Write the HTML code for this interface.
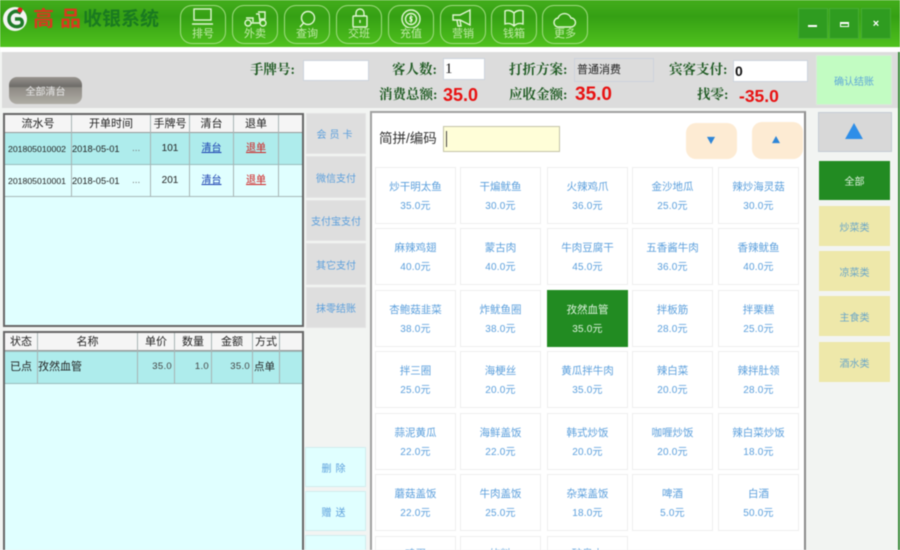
<!DOCTYPE html>
<html lang="zh"><head><meta charset="utf-8"><title>收银系统</title>
<style>
html,body{margin:0;padding:0;width:900px;height:550px;overflow:hidden;background:#f2f4f2}
#p{position:relative;width:900px;height:550px;overflow:hidden;font-family:"Liberation Sans","Noto Sans CJK SC",sans-serif;filter:blur(.45px);background:#f2f4f2}
#p div,#p span.a,#p svg{position:absolute;box-sizing:border-box}
.c{display:flex;align-items:center;justify-content:center;text-align:center}
.ib{top:5px;width:46px;height:39px;border:1px solid #9fdc80;border-radius:12px;color:#c0eaa8;font-size:11px;text-align:center;padding-top:21px;line-height:14px}
.ib svg{left:10px;top:2px;width:24px;height:20px;fill:none;stroke:#e0f6d2;stroke-width:1.4}
.wb{top:8px;width:30px;height:31px;background:#2f9c20;border:1px solid #46ad33;color:#fff}
.l{font-family:"Liberation Serif","Noto Serif CJK SC",serif;font-weight:bold;font-size:13.5px;color:#1e5a22;white-space:nowrap;line-height:16px}
.r{font-weight:bold;font-size:18px;color:#e81212;line-height:18px;white-space:nowrap}
.in{background:#fff;border:1px solid #ccd4dc}
.tb{background:#e0ffff;border:2px solid #666}
.v{top:0;bottom:0;width:1px;background:#a8b4b4}
.cell{font-size:10px;line-height:14px;color:#222;white-space:nowrap}
.h{background:#f5f5f5;height:18px;left:0;right:0;top:0;border-bottom:1px solid #999}
.m{left:306px;width:60px;background:#dedede;border:1px solid #e4e4e4;color:#5b9fdc;font-size:10px}
.n{left:305px;width:61px;background:#e0ffff;border:1px solid #d0eeee;color:#5b9fdc;font-size:10px}
.t{width:81px;height:57px;background:#fff;border:1px solid #eee;color:#5b9fdc;text-align:center;font-size:10.5px;line-height:14px;padding-top:12px;overflow:hidden}
.t span{display:block}.t span+span{margin-top:6px;font-size:10px;letter-spacing:.2px}
.t.s{background:#228b22;color:#dff3df;border-color:#228b22}
.t.e{height:14px;padding-top:10px;border-bottom:0}
.k{left:819px;width:71px;height:40px;background:#eee8aa;color:#6aa6c8;font-size:10px}
.lk{text-decoration:underline;font-weight:normal}
.id{font-size:8.7px}.dt{font-size:9.3px}
.nm{text-align:right;font-size:9.5px;letter-spacing:.3px;color:#444}
</style></head><body><div id="p">

<div style="left:0;top:0;width:900px;height:47px;background:linear-gradient(#43ad1c,#35a014 35%,#50c21e)"></div>
<div style="left:0;top:47px;width:900px;height:5px;background:#fff"></div>
<div style="left:2px;top:52px;width:896px;height:56px;background:#dcdcdc"></div>

<svg style="left:2px;top:5px;width:28px;height:27px" viewBox="0 0 28 27"><circle cx="13" cy="14" r="12" fill="#f4f4f4"/><path d="M19 8C13 4 7 8 7 14s6 9 11 7c3-1 3-6 0-7h-5" fill="none" stroke="#1e7a28" stroke-width="3.5"/><circle cx="18" cy="5" r="2.500" fill="#e02020"/></svg>
<span class="a" style="left:33px;top:8px;font:bold 21px/24px 'Liberation Sans','Noto Sans CJK SC',sans-serif;color:#d9381e;letter-spacing:6px;white-space:nowrap">高品</span>
<span class="a" style="left:83px;top:9px;font:bold 19px/22px 'Liberation Sans','Noto Sans CJK SC',sans-serif;color:#1a7a20;white-space:nowrap">收银系统</span>

<div class="ib" style="left:180px"><svg viewBox="0 0 24 20"><rect x="3" y="1" width="17" height="11"/><path d="M1 16h21"/></svg>排号</div>
<div class="ib" style="left:232px"><svg viewBox="0 0 24 20"><circle cx="5" cy="15" r="3"/><circle cx="20" cy="15" r="3"/><path d="M8 15h9l-1-9h-3M3 10h7v4M15 4h7v7h-5"/></svg>外卖</div>
<div class="ib" style="left:284px"><svg viewBox="0 0 24 20"><circle cx="13" cy="10" r="6.500"/><path d="M8.500 15L5 19"/></svg>查询</div>
<div class="ib" style="left:336px"><svg viewBox="0 0 24 20"><rect x="6" y="8" width="14" height="11" rx="1"/><path d="M9 8V5a4 4 0 0 1 8 0v3M13 12v3"/></svg>交班</div>
<div class="ib" style="left:388px"><svg viewBox="0 0 24 20"><circle cx="12" cy="11" r="9"/><circle cx="12" cy="11" r="5.500"/><path d="M14 9h-3v2h2v2h-3M12 7v8" stroke-width="1"/></svg>充值</div>
<div class="ib" style="left:440px"><svg viewBox="0 0 24 20"><path d="M2 7h7l10-5v15L9 12H2zM6 12l1 6h3l-1-6"/></svg>营销</div>
<div class="ib" style="left:491px"><svg viewBox="0 0 24 20"><path d="M12 5C9 2 5 2 3 3v13c3-1 6-1 9 2 3-3 6-3 9-2V3c-2-1-6-1-9 2zM12 5v13"/></svg>钱箱</div>
<div class="ib" style="left:542px"><svg viewBox="0 0 24 20"><path d="M6 19a4.500 4.500 0 0 1-1-9 7 7 0 0 1 13 0 4.500 4.500 0 0 1 0 9z"/></svg>更多</div>

<div class="wb c" style="left:798px"><div style="left:9px;top:16px;width:9px;height:2px;background:#fff"></div></div>
<div class="wb c" style="left:829px"><div style="left:10px;top:13px;width:9px;height:5px;border:1.500px solid #fff;border-top-width:2px"></div></div>
<div class="wb c" style="left:861px;font:bold 11px/12px 'Liberation Sans',sans-serif">×</div>

<div class="c" style="left:9px;top:77px;width:73px;height:27px;border-radius:8px;background:linear-gradient(#98948e,#6d6b68 35%,#8e8b85 40%,#b0ada6);color:#e8e8e8;font-size:10px">全部清台</div>

<span class="a l" style="left:250px;top:62px">手牌号:</span>
<div class="in" style="left:303px;top:60px;width:66px;height:21px"></div>
<span class="a l" style="left:392px;top:62px">客人数:</span>
<div class="in" style="left:443px;top:58px;width:42px;height:22px;font:15px/20px 'Liberation Serif',serif;color:#111;padding-left:1px">1</div>
<span class="a l" style="left:379px;top:87px">消费总额:</span>
<span class="a r" style="left:443px;top:86px">35.0</span>
<span class="a l" style="left:509px;top:62px">打折方案:</span>
<div style="left:574px;top:58px;width:80px;height:24px;background:#dcdcdc;border:1px solid #ccd2dc;font-size:11px;line-height:22px;padding-left:2px;color:#222">普通消费</div>
<span class="a l" style="left:509px;top:87px">应收金额:</span>
<span class="a r" style="left:575px;top:86px;font-size:19px">35.0</span>
<span class="a l" style="left:669px;top:62px">宾客支付:</span>
<div class="in" style="left:733px;top:60px;width:75px;height:22px;font:bold 14px/20px 'Liberation Sans',sans-serif;color:#111;padding-left:1px">0</div>
<span class="a l" style="left:697px;top:87px">找零:</span>
<span class="a r" style="left:739px;top:87px;font-size:17.5px">-35.0</span>
<div class="c" style="left:816px;top:55px;width:76px;height:50px;background:#c2fcc2;border:1px solid #d8ecd8;color:#5fa8d8;font-size:10px">确认结账</div>

<!-- top table -->
<div class="tb" style="left:3px;top:113px;width:301px;height:214px">
  <div class="h"></div>
  <div style="left:0;right:0;top:18px;height:32px;background:#aeecec;border-bottom:1px solid #9bb"></div>
  <div style="left:0;right:0;top:50px;height:32px;border-bottom:1px solid #a8b8b8"></div>
  <div style="left:0;right:0;top:0;height:82px">
  <div class="v" style="left:66px"></div><div class="v" style="left:145px"></div><div class="v" style="left:184px"></div><div class="v" style="left:228px"></div><div class="v" style="left:273px"></div>
  </div>
  <div class="cell c" style="left:0;top:2px;width:66px;font-size:11px">流水号</div>
  <div class="cell c" style="left:67px;top:2px;width:78px;font-size:11px">开单时间</div>
  <div class="cell c" style="left:146px;top:2px;width:38px;font-size:11px">手牌号</div>
  <div class="cell c" style="left:185px;top:2px;width:43px;font-size:11px">清台</div>
  <div class="cell c" style="left:229px;top:2px;width:44px;font-size:11px">退单</div>

  <div class="cell id" style="left:3px;top:27px">201805010002</div>
  <div class="cell dt" style="left:67px;top:27px">2018-05-01</div>
  <div class="cell" style="left:127px;top:27px;color:#777">...</div>
  <div class="cell c" style="left:146px;top:27px;width:38px">101</div>
  <div class="cell c" style="left:185px;top:27px;width:43px;color:#1a3fb0"><span class="lk">清台</span></div>
  <div class="cell c" style="left:229px;top:27px;width:44px;color:#d02020"><span class="lk">退单</span></div>

  <div class="cell id" style="left:3px;top:59px">201805010001</div>
  <div class="cell dt" style="left:67px;top:59px">2018-05-01</div>
  <div class="cell" style="left:127px;top:59px;color:#777">...</div>
  <div class="cell c" style="left:146px;top:59px;width:38px">201</div>
  <div class="cell c" style="left:185px;top:59px;width:43px;color:#1a3fb0"><span class="lk">清台</span></div>
  <div class="cell c" style="left:229px;top:59px;width:44px;color:#d02020"><span class="lk">退单</span></div>
</div>

<!-- bottom table -->
<div class="tb" style="left:3px;top:331px;width:301px;height:219px;border-bottom:0">
  <div class="h"></div>
  <div style="left:0;right:0;top:18px;height:33px;background:#aeecec;border-bottom:1px solid #9bb;border-top:1px solid #9bb"></div>
  <div style="left:0;right:0;top:0;height:51px">
  <div class="v" style="left:32px"></div><div class="v" style="left:132px"></div><div class="v" style="left:169px"></div><div class="v" style="left:206px"></div><div class="v" style="left:247px"></div><div class="v" style="left:274px"></div>
  </div>
  <div class="cell c" style="left:0;top:2px;width:32px;font-size:11px">状态</div>
  <div class="cell c" style="left:33px;top:2px;width:99px;font-size:11px">名称</div>
  <div class="cell c" style="left:133px;top:2px;width:36px;font-size:11px">单价</div>
  <div class="cell c" style="left:170px;top:2px;width:36px;font-size:11px">数量</div>
  <div class="cell c" style="left:207px;top:2px;width:40px;font-size:11px">金额</div>
  <div class="cell c" style="left:248px;top:2px;width:26px;font-size:11px">方式</div>
  <div class="cell c" style="left:0;top:27px;width:32px;font-size:11px">已点</div>
  <div class="cell" style="left:33px;top:27px;font-size:11px">孜然血管</div>
  <div class="cell nm" style="left:133px;top:27px;width:34px">35.0</div>
  <div class="cell nm" style="left:170px;top:27px;width:34px">1.0</div>
  <div class="cell nm" style="left:207px;top:27px;width:38px">35.0</div>
  <div class="cell" style="left:249px;top:27px;font-size:10.5px">点单</div>
</div>

<!-- payment buttons -->
<div class="m c" style="top:113px;height:41px;letter-spacing:3px">会员卡</div>
<div class="m c" style="top:156px;height:42px">微信支付</div>
<div class="m c" style="top:200px;height:41px">支付宝支付</div>
<div class="m c" style="top:243px;height:42px">其它支付</div>
<div class="m c" style="top:287px;height:41px">抹零结账</div>
<div class="n c" style="top:447px;height:40px;letter-spacing:4px">删除</div>
<div class="n c" style="top:491px;height:40px;letter-spacing:4px">赠送</div>
<div class="n" style="top:535px;height:15px;border-bottom:0"></div>

<!-- main panel -->
<div style="left:370px;top:111px;width:436px;height:439px;background:#fff;border:2px solid #a0a0a0;border-right-color:#8a8a8a;border-bottom:0"></div>
<span class="a" style="left:379px;top:130px;font:13.500px/18px 'Liberation Sans','Noto Sans CJK SC',sans-serif;color:#333;white-space:nowrap">简拼/编码</span>
<div style="left:443px;top:126px;width:117px;height:26px;background:#fffed8;border:1px solid #c4c4a8"><div style="left:2px;top:4px;width:1px;height:16px;background:#444"></div></div>
<div style="left:686px;top:123px;width:51px;height:36px;background:#fdebd3;border-radius:10px"><svg style="left:20px;top:13px;width:10px;height:9px" viewBox="0 0 11 10"><path d="M1 1h9L5.500 9z" fill="#2e86d8"/></svg></div>
<div style="left:752px;top:122px;width:51px;height:37px;background:#fdebd3;border-radius:10px"><svg style="left:19px;top:14px;width:10px;height:8px" viewBox="0 0 11 9"><path d="M1 8h9L5.500 0z" fill="#2e86d8"/></svg></div>

<div class="t" style="left:375px;top:167px"><span>炒干明太鱼</span><span>35.0元</span></div>
<div class="t" style="left:460px;top:167px"><span>干煸鱿鱼</span><span>30.0元</span></div>
<div class="t" style="left:547px;top:167px"><span>火辣鸡爪</span><span>36.0元</span></div>
<div class="t" style="left:632px;top:167px"><span>金沙地瓜</span><span>25.0元</span></div>
<div class="t" style="left:718px;top:167px"><span>辣炒海灵菇</span><span>30.0元</span></div>

<div class="t" style="left:375px;top:228px"><span>麻辣鸡翅</span><span>40.0元</span></div>
<div class="t" style="left:460px;top:228px"><span>蒙古肉</span><span>40.0元</span></div>
<div class="t" style="left:547px;top:228px"><span>牛肉豆腐干</span><span>45.0元</span></div>
<div class="t" style="left:632px;top:228px"><span>五香酱牛肉</span><span>36.0元</span></div>
<div class="t" style="left:718px;top:228px"><span>香辣鱿鱼</span><span>40.0元</span></div>

<div class="t" style="left:375px;top:290px"><span>杏鲍菇韭菜</span><span>38.0元</span></div>
<div class="t" style="left:460px;top:290px"><span>炸鱿鱼圈</span><span>38.0元</span></div>
<div class="t s" style="left:547px;top:290px"><span>孜然血管</span><span>35.0元</span></div>
<div class="t" style="left:632px;top:290px"><span>拌板筋</span><span>28.0元</span></div>
<div class="t" style="left:718px;top:290px"><span>拌栗糕</span><span>25.0元</span></div>

<div class="t" style="left:375px;top:351px"><span>拌三圈</span><span>25.0元</span></div>
<div class="t" style="left:460px;top:351px"><span>海梗丝</span><span>20.0元</span></div>
<div class="t" style="left:547px;top:351px"><span>黄瓜拌牛肉</span><span>35.0元</span></div>
<div class="t" style="left:632px;top:351px"><span>辣白菜</span><span>20.0元</span></div>
<div class="t" style="left:718px;top:351px"><span>辣拌肚领</span><span>28.0元</span></div>

<div class="t" style="left:375px;top:413px"><span>蒜泥黄瓜</span><span>22.0元</span></div>
<div class="t" style="left:460px;top:413px"><span>海鲜盖饭</span><span>22.0元</span></div>
<div class="t" style="left:547px;top:413px"><span>韩式炒饭</span><span>20.0元</span></div>
<div class="t" style="left:632px;top:413px"><span>咖喱炒饭</span><span>20.0元</span></div>
<div class="t" style="left:718px;top:413px"><span>辣白菜炒饭</span><span>18.0元</span></div>

<div class="t" style="left:375px;top:474px"><span>蘑菇盖饭</span><span>22.0元</span></div>
<div class="t" style="left:460px;top:474px"><span>牛肉盖饭</span><span>25.0元</span></div>
<div class="t" style="left:547px;top:474px"><span>杂菜盖饭</span><span>18.0元</span></div>
<div class="t" style="left:632px;top:474px"><span>啤酒</span><span>5.0元</span></div>
<div class="t" style="left:718px;top:474px"><span>白酒</span><span>50.0元</span></div>

<div class="t e" style="left:375px;top:536px"><span>鸡蛋</span></div>
<div class="t e" style="left:460px;top:536px"><span>饮料</span></div>
<div class="t e" style="left:547px;top:536px"><span>矿泉水</span></div>

<!-- right column -->
<div style="left:818px;top:112px;width:74px;height:40px;background:#d8d8d8;border:1px solid #c4ccd4"><svg style="left:26px;top:10px;width:18px;height:16px" viewBox="0 0 20 18"><path d="M0 18h20L10 0z" fill="#2e8ee8"/></svg></div>
<div class="k c" style="top:161px;height:39px;background:#228b22;color:#dff3df">全部</div>
<div class="k c" style="top:206px">炒菜类</div>
<div class="k c" style="top:251px">凉菜类</div>
<div class="k c" style="top:296px">主食类</div>
<div class="k c" style="top:342px">酒水类</div>
<div style="left:898px;top:52px;width:2px;height:498px;background:#3a8a3a"></div>
</div></body></html>
